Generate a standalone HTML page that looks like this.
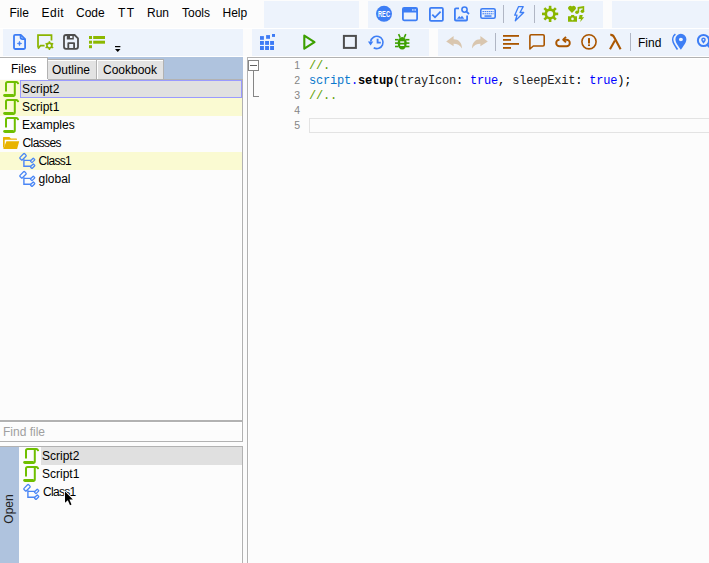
<!DOCTYPE html>
<html><head><meta charset="utf-8">
<style>
html,body{margin:0;padding:0}
body{width:709px;height:563px;position:relative;overflow:hidden;background:#fcfcfc;font-family:"Liberation Sans",sans-serif;font-size:12px;color:#000}
.a{position:absolute}
.t{position:absolute;line-height:14px;white-space:pre}
.tb{position:absolute;background:#edf3fc}
svg{position:absolute;overflow:visible}
.sep{position:absolute;width:1px;background:#b4bccb}
.ln{left:270px;width:30px;text-align:right;font-size:10.5px;line-height:15px;color:#858585}
.code{left:309px;font-family:"Liberation Mono",monospace;font-size:12px;letter-spacing:-0.2px;line-height:15px;white-space:pre;color:#000}
.code b{font-weight:bold}
.row{position:absolute;left:0;width:242px;height:18px}
</style></head><body>
<!-- menu -->
<div class="t" style="left:9.5px;top:6px">File</div>
<div class="t" style="left:41.5px;top:6px;letter-spacing:0.5px">Edit</div>
<div class="t" style="left:76px;top:6px">Code</div>
<div class="t" style="left:118px;top:6px;letter-spacing:1.3px">TT</div>
<div class="t" style="left:147px;top:6px">Run</div>
<div class="t" style="left:182px;top:6px">Tools</div>
<div class="t" style="left:222.5px;top:6px">Help</div>

<!-- toolbars -->
<div class="a" style="left:0;top:28px;width:709px;height:1px;background:#fff"></div>
<div class="a" style="left:0;top:56px;width:709px;height:1px;background:#fff"></div>
<div class="tb" style="left:3px;top:29px;width:240px;height:27px"></div>
<div class="tb" style="left:264px;top:1px;width:95px;height:27px"></div>
<div class="tb" style="left:368px;top:1px;width:235px;height:27px"></div>
<div class="tb" style="left:612px;top:1px;width:97px;height:27px"></div>
<div class="tb" style="left:252px;top:29px;width:177px;height:27px"></div>
<div class="tb" style="left:438px;top:29px;width:271px;height:27px"></div>

<div class="t" style="left:638px;top:36px">Find</div>
<!-- left panel tabs -->
<div class="a" style="left:0;top:57px;width:243px;height:22px;background:#afc3de"></div>
<div class="a" style="left:0;top:58px;width:47px;height:22px;background:#fff"></div>
<div class="a" style="left:0;top:57px;width:48px;height:1px;background:#b2b2b2"></div>
<div class="a" style="left:47px;top:57px;width:1px;height:23px;background:#b2b2b2"></div>
<div class="a" style="left:48px;top:59px;width:48px;height:20px;background:#e3e3e3;border-top:1px solid #b0b0b0;box-shadow:inset 0 1px 0 #fff"></div>
<div class="a" style="left:96px;top:59px;width:1px;height:20px;background:#b2b2b2"></div>
<div class="a" style="left:97px;top:59px;width:66px;height:20px;background:#e3e3e3;border-top:1px solid #b0b0b0;box-shadow:inset 1px 1px 0 #fff"></div>
<div class="a" style="left:163px;top:59px;width:1px;height:20px;background:#b2b2b2"></div>
<div class="t" style="left:11px;top:62px">Files</div>
<div class="t" style="left:52px;top:63px">Outline</div>
<div class="t" style="left:103px;top:63px">Cookbook</div>

<!-- tree -->
<div class="a" style="left:0;top:79px;width:242px;height:341px;background:#fcfcfc;border-right:1px solid #b2b2b2;box-shadow:inset -1px 0 0 #fff"></div>
<div class="a" style="left:48px;top:79px;width:194px;height:1px;background:#b2b2b2"></div>
<div class="row" style="top:80px;background:#fafad2"></div>
<div class="a" style="left:20px;top:80px;width:220px;height:16px;background:#e0e0e0;border:1px solid #9a9aff"></div>
<div class="row" style="top:98px;background:#fafad2"></div>
<div class="row" style="top:152px;background:#fafad2"></div>
<div class="t" style="left:22px;top:82px">Script2</div>
<div class="t" style="left:22px;top:100px">Script1</div>
<div class="t" style="left:22px;top:118px">Examples</div>
<div class="t" style="left:22.5px;top:136px;letter-spacing:-0.6px">Classes</div>
<div class="t" style="left:38.5px;top:154px;letter-spacing:-0.7px">Class1</div>
<div class="t" style="left:38.5px;top:172px">global</div>

<!-- find file -->
<div class="a" style="left:0;top:420px;width:243px;height:2px;background:#b2b2b2"></div>
<div class="a" style="left:0;top:422px;width:242px;height:19px;background:#fcfcfc;border-right:1px solid #b2b2b2;border-bottom:1px solid #b2b2b2;box-shadow:inset -1px 1px 0 #fff"></div>
<div class="t" style="left:3px;top:425px;color:#a0a0a0">Find file</div>

<!-- open panel -->
<div class="a" style="left:0;top:446px;width:242px;height:117px;background:#fcfcfc;border-top:1px solid #b2b2b2;border-right:1px solid #b2b2b2;box-shadow:inset -1px 0 0 #fff"></div>
<div class="a" style="left:0;top:447px;width:19px;height:116px;background:#afc3de"></div>
<div class="a" style="left:41px;top:447px;width:201px;height:18px;background:#e0e0e0"></div>
<div class="t" style="left:42px;top:449px">Script2</div>
<div class="t" style="left:42px;top:467px">Script1</div>
<div class="t" style="left:43px;top:485px;letter-spacing:-0.7px">Class1</div>
<div class="t" style="left:-6px;top:502px;transform:rotate(-90deg);transform-origin:center;color:#222">Open</div>

<!-- editor -->
<div class="a" style="left:247px;top:57px;width:462px;height:506px;background:#fcfcfc;border-left:1px solid #b2b2b2;border-top:1px solid #b2b2b2;box-shadow:inset 1px 1px 0 #fff"></div>



<!-- editor content -->
<div class="a" style="left:248px;top:60px;width:9px;height:9px;border:1px solid #858585;background:#fff"></div>
<div class="a" style="left:250px;top:65px;width:7px;height:1px;background:#606060"></div>
<div class="a" style="left:253px;top:71px;width:1px;height:25px;background:#858585"></div>
<div class="a" style="left:253px;top:96px;width:6px;height:1px;background:#858585"></div>
<div class="a" style="left:309px;top:118px;width:420px;height:13px;border:1px solid #e3e3e3"></div>
<div class="a ln" style="top:58px">1</div>
<div class="a ln" style="top:73px">2</div>
<div class="a ln" style="top:88px">3</div>
<div class="a ln" style="top:103px">4</div>
<div class="a ln" style="top:118px">5</div>
<div class="a code" style="top:59px"><span style="color:#60a000">//.</span></div>
<div class="a code" style="top:74px"><span style="color:#0a78cc">script</span><span style="color:#0000ff">.</span><b>setup</b>(<span style="color:#222">trayIcon</span>: <span style="color:#0000ff">true</span>, <span style="color:#222">sleepExit</span>: <span style="color:#0000ff">true</span>);</div>
<div class="a code" style="top:89px"><span style="color:#60a000">//..</span></div>
<svg class="a" style="left:0;top:0" width="709" height="563" viewBox="0 0 709 563">
<defs>
<g id="scr">
<path d="M3 10.6 V2.6 Q3 1 4.6 1 H13.2 Q14.8 1 15.2 3.1" fill="none" stroke="#6fbf00" stroke-width="2"/>
<path d="M11.8 1.5 V13.2 Q11.8 14.9 10.1 14.9" fill="none" stroke="#6fbf00" stroke-width="2"/>
<path d="M0.2 13.9 Q0.4 12.9 1.5 12.9 H10.6 L11 15.9 H2 Q0.2 15.9 0.2 14.3 Z" fill="#6fbf00"/>
</g>
<g id="cls" fill="none" stroke="#4a86f5" stroke-width="1.3">
<rect x="-3.3" y="-1.7" width="6.6" height="3.4" rx="0.8" transform="translate(5 4.8) rotate(-45)"/>
<rect x="-2.1" y="-1.2" width="4.2" height="2.4" rx="0.5" transform="translate(14.6 8.4) rotate(-45)"/>
<rect x="-2.1" y="-1.2" width="4.2" height="2.4" rx="0.5" transform="translate(14.6 14.2) rotate(-45)"/>
<path d="M5.9 7.2 V14.2 H13 M5.9 8.4 H13" stroke-width="1.4"/>
</g>
</defs>
<use href="#scr" x="3" y="81"/>
<use href="#scr" x="3" y="99"/>
<use href="#scr" x="3" y="117"/>
<use href="#cls" x="18" y="152"/>
<use href="#cls" x="18" y="170"/>
<use href="#scr" x="23" y="448"/>
<use href="#scr" x="23" y="466"/>
<use href="#cls" x="22" y="483"/>
<path d="M3 148.6 V137.6 Q3 137 3.6 137 H9.4 L10.9 138.6 H16.4 Q17 138.6 17 139.2 V139.8 H4.7 V145.6 Z" fill="#e8b400"/>
<path d="M6.4 141.2 H19.2 L17.1 149 H3.3 Z" fill="#e8b400"/>
<path d="M65 491.6 V502.8 L67.8 500.2 L70 505.3 L71.5 504.6 L69.4 499.6 L72.9 499.4 Z" fill="#000" stroke="#fff" stroke-width="1.6" paint-order="stroke" stroke-linejoin="round"/>
<!-- left toolbar -->
<g fill="none" stroke="#3b7cf5" stroke-width="1.8" stroke-linejoin="round">
<path d="M14 36 Q14 34.8 15.2 34.8 H20.8 L25.1 39.1 V47.8 Q25.1 49 23.9 49 H15.2 Q14 49 14 47.8 Z"/>
<path d="M20.6 35 V37.3 Q20.6 39.1 22.4 39.1 H25"/>
</g>
<path d="M19.5 41.1 L20.1 42.9 L21.9 43.5 L20.1 44.1 L19.5 45.9 L18.9 44.1 L17.1 43.5 L18.9 42.9 Z" fill="#3b7cf5" stroke="#3b7cf5" stroke-width="0.5" stroke-linejoin="round"/>
<g fill="none" stroke="#8ab400" stroke-width="1.75">
<path d="M38 47.5 V35 H51.5 V40.5"/>
<path d="M38 48.6 L40.6 45.5 H44.6"/>
<circle cx="49.4" cy="45.6" r="2.45" stroke-width="1.75"/>
</g>
<g fill="#8ab400">
<rect x="48.65" y="41.2" width="1.5" height="8.8"/>
<rect x="48.65" y="41.2" width="1.5" height="8.8" transform="rotate(60 49.4 45.6)"/>
<rect x="48.65" y="41.2" width="1.5" height="8.8" transform="rotate(120 49.4 45.6)"/>
</g>
<circle cx="49.4" cy="45.6" r="1.55" fill="#edf3fc"/>
<g fill="none" stroke="#4d4d4d" stroke-width="1.8" stroke-linejoin="round">
<path d="M64 37 Q64 35 66 35 H74.6 L78 38.4 V46.8 Q78 48.8 76 48.8 H66 Q64 48.8 64 46.8 Z"/>
<path d="M68.3 48.8 V43.2 H74.1 V48.8"/>
</g>
<path d="M66.8 34.5 H73.8 V39.4 H66.8 Z M70 35.8 V38 H72.4 V35.8 Z" fill="#4d4d4d" fill-rule="evenodd"/>
<g fill="#8cb800">
<rect x="89" y="36" width="3" height="3"/><rect x="89" y="40.7" width="3" height="3"/><rect x="89" y="45.2" width="3" height="3"/>
<rect x="93.2" y="36" width="11.8" height="3"/><rect x="93.2" y="40.7" width="11.8" height="3"/>
</g>
<rect x="115" y="46" width="5.4" height="1.2" fill="#000"/>
<path d="M115 49 H120.5 L117.75 52 Z" fill="#000"/>

<!-- top right toolbar row1 -->
<circle cx="384" cy="13.8" r="8" fill="#3d7ef5"/>
<text x="384" y="17.4" fill="#fff" font-family="Liberation Sans" font-weight="bold" font-size="8.4" text-anchor="middle" textLength="12" lengthAdjust="spacingAndGlyphs">REC</text>
<g fill="none" stroke="#3d7ef5" stroke-width="1.8">
<rect x="402.9" y="7.9" width="14.2" height="12.4" rx="1.2"/>
<rect x="429.9" y="7.9" width="13" height="13" rx="1.2"/>
<path d="M432.3 14.6 L435 17.3 L440.6 11.6"/>
<path d="M459 8.4 H456 Q454.9 8.4 454.9 9.5 V19.4 Q454.9 20.5 456 20.5 H466 Q467.1 20.5 467.1 19.4 V15.5"/>
<circle cx="464.5" cy="9.6" r="2.6" stroke-width="1.6"/>
<path d="M466.5 11.6 L469 14" stroke-width="1.8"/>
</g>
<rect x="403" y="8" width="14" height="4.5" fill="#3d7ef5"/>
<rect x="412.2" y="9.3" width="1.3" height="1.3" fill="#fff"/><rect x="414.5" y="9.3" width="1.3" height="1.3" fill="#fff"/>
<path d="M457 18.7 L459.2 16 L460.6 17.6 L462 15.8 L464.3 18.7 Z" fill="#3d7ef5"/>
<g fill="none" stroke="#3d7ef5" stroke-width="1.6">
<rect x="480.8" y="8.7" width="14.4" height="9.6" rx="1.6"/>
</g>
<g fill="#3d7ef5">
<rect x="482.5" y="11" width="11" height="1.1"/><rect x="482.5" y="13.2" width="11" height="1.1"/>
<rect x="484.5" y="15.3" width="7" height="1.5"/>
</g>
<g stroke="#eef3fc" stroke-width="0.6">
<path d="M484.4 10.5 V14.8 M486.4 10.5 V14.8 M488.4 10.5 V14.8 M490.4 10.5 V14.8 M492.4 10.5 V14.8"/>
</g>
<rect x="503" y="5" width="1" height="18" fill="#b0b6c4"/>
<path d="M518.6 6.6 H523.2 L520 12.5 H523.7 L515.3 20.8 L517 15.2 H514.7 Z" fill="none" stroke="#3d7ef5" stroke-width="1.3" stroke-linejoin="round"/>
<rect x="534" y="5" width="1" height="18" fill="#b0b6c4"/>
<g fill="#8ab600">
<circle cx="550.1" cy="13.9" r="5.6"/>
<rect x="548.8" y="5.8" width="2.6" height="16.2"/>
<rect x="548.8" y="5.8" width="2.6" height="16.2" transform="rotate(45 550.1 13.9)"/>
<rect x="548.8" y="5.8" width="2.6" height="16.2" transform="rotate(90 550.1 13.9)"/>
<rect x="548.8" y="5.8" width="2.6" height="16.2" transform="rotate(135 550.1 13.9)"/>
</g>
<circle cx="550.1" cy="13.9" r="3" fill="#eef3fc"/>
<g fill="#8ab600">
<path d="M572 12.9 L568.6 9.6 A2.25 2.25 0 0 1 572 6.6 A2.25 2.25 0 0 1 575.4 9.6 Z"/>
<path d="M577.6 7 L584.2 6.1 V11.2 H582.6 V8.3 L579.2 8.8 V12.3 H577.6 Z"/>
<circle cx="577" cy="12.3" r="1.8"/><circle cx="582.4" cy="11.2" r="1.8"/>
<path d="M568 16.3 H570.8 L571.3 15 H574 L574.5 16.3 H577 V21.7 H568 Z M572.5 17.6 A1.3 1.3 0 1 0 572.5 20.2 A1.3 1.3 0 1 0 572.5 17.6 Z" fill-rule="evenodd"/>
<path d="M579.6 15 H582.8 L582 17.2 H584.2 L580.2 22 L580.9 18.9 H578.6 Z"/>
</g>

<!-- row2 right -->
<g fill="#3d7bf5">
<rect x="260" y="46" width="3.9" height="4"/><rect x="265.1" y="46" width="3.9" height="4"/><rect x="270.1" y="46" width="3.9" height="4"/>
<rect x="260" y="41" width="3.9" height="3.9"/><rect x="265.1" y="41" width="3.9" height="3.9"/><rect x="270.1" y="41" width="3.9" height="3.9"/>
<rect x="260" y="36.1" width="3.9" height="3.7"/><rect x="266.1" y="35.1" width="3.9" height="3.7"/><rect x="272" y="34" width="3" height="2.9"/>
</g>
<path d="M304.3 35.6 L314.5 42.1 L304.3 48.6 Z" fill="none" stroke="#3ca000" stroke-width="2.1" stroke-linejoin="round"/>
<rect x="343.9" y="35.9" width="12" height="12" fill="none" stroke="#4d4d4d" stroke-width="2"/>
<g fill="none" stroke="#3d7ef5" stroke-width="1.6">
<path d="M370.7 41.5 A6.2 6.2 0 1 1 373.7 47.8"/>
<path d="M377.6 38.8 V42.6 H380.8" stroke-width="1.9"/>
</g>
<path d="M367.9 41.4 H373.3 L370.6 45.4 Z" fill="#3d7ef5"/>
<g fill="#3ca000">
<ellipse cx="402.2" cy="43.2" rx="4.5" ry="6.3"/>
<rect x="395" y="38.9" width="3.5" height="1.6"/><rect x="395" y="42.3" width="3.5" height="1.6"/><rect x="395" y="45.7" width="3.5" height="1.6"/>
<rect x="405.9" y="38.9" width="3.5" height="1.6"/><rect x="405.9" y="42.3" width="3.5" height="1.6"/><rect x="405.9" y="45.7" width="3.5" height="1.6"/>
</g>
<path d="M398.6 34.2 L400.2 37.6 M405.8 34.2 L404.2 37.6" stroke="#3ca000" stroke-width="1.6"/>
<g fill="#edf3fc"><rect x="400.2" y="41.3" width="4" height="1.5"/><rect x="400.2" y="44.5" width="4" height="1.5"/></g>

<path d="M446.2 41.6 L453.6 35.9 V39.2 C458.5 39.2 462 42.5 461.9 48.4 C460 45 457 43.8 453.6 43.8 V46.2 Z" fill="#d9c6af"/>
<path d="M487.8 41.6 L480.4 35.9 V39.2 C475.5 39.2 472 42.5 472.1 48.4 C474 45 477 43.8 480.4 43.8 V46.2 Z" fill="#d9c6af"/>
<rect x="495" y="33" width="1" height="18" fill="#b0b6c4"/>
<g fill="#aa5600">
<rect x="503" y="35" width="16" height="1.8"/><rect x="503" y="39" width="8" height="1.8"/>
<rect x="503" y="43" width="16" height="1.8"/><rect x="503" y="47" width="8" height="1.8"/>
</g>
<g fill="none" stroke="#aa5600" stroke-width="1.6" stroke-linejoin="round">
<path d="M529.9 49 V36 Q529.9 34.8 531.1 34.8 H543 Q544.2 34.8 544.2 36 V44.8 Q544.2 46 543 46 H533.3 Z"/>
<path d="M559.5 39.7 A3.3 3.3 0 0 0 559.5 46.3 H566.5 A3.3 3.3 0 0 0 566.5 39.7 H563" stroke-width="1.9"/>
<path d="M566 36.8 L563.2 39.7 L566 42.4" stroke-width="1.9"/>
<circle cx="589" cy="41.8" r="7.1"/>
</g>
<g fill="#aa5600"><rect x="588" y="38.1" width="2" height="5.4"/><rect x="588" y="44.4" width="2" height="1.6"/></g>
<g fill="none" stroke="#aa5600" stroke-width="2.1">
<path d="M610.3 34.9 Q613 34.6 614.2 37.3 L620.6 49.2"/>
<path d="M614.9 40.6 L610 49.3"/>
</g>
<rect x="630" y="33" width="1" height="18" fill="#b0b6c4"/>
<path d="M680.9 49.8 C678.6 46.3 675.4 43 675.4 39.3 A5.5 5.5 0 0 1 686.4 39.3 C686.4 43 683.2 46.3 680.9 49.8 Z M680.9 37.8 A2 1.7 0 1 0 680.9 41.2 A2 1.7 0 1 0 680.9 37.8 Z" fill="#3d7ef5" fill-rule="evenodd"/>
<path d="M675.4 34.2 C673 36 672 39.5 673.3 42.5 C674.5 45.2 676.2 47.5 677.5 49.5" fill="none" stroke="#3d7ef5" stroke-width="1.6"/>
<circle cx="703.5" cy="40.5" r="5.6" fill="none" stroke="#3d7ef5" stroke-width="2"/>
<path d="M703.5 43.7 C702.6 42.6 701.2 41.3 701.2 39.8 A2.3 2.3 0 0 1 705.8 39.8 C705.8 41.3 704.4 42.6 703.5 43.7 Z M703.5 38.9 A0.85 0.85 0 1 0 703.5 40.6 A0.85 0.85 0 1 0 703.5 38.9 Z" fill="#3d7ef5" fill-rule="evenodd"/>
<path d="M707 44.5 L710 47.5" stroke="#3d7ef5" stroke-width="2.2"/>
</svg>
</body></html>
